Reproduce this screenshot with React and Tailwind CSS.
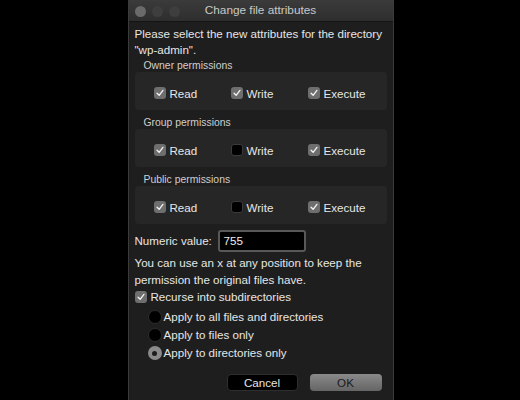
import React from "react";

function Check({ checked }) {
  return checked ? (
    <span className="flex h-[12px] w-[12px] shrink-0 items-center justify-center rounded-[3px] bg-[#6e6e6e]">
      <svg viewBox="0 0 12 12" className="h-[10px] w-[10px]">
        <path d="M2.5 6.3 L5 8.8 L9.5 2.8" fill="none" stroke="#f2f2f2" strokeWidth="1.6" strokeLinecap="round" strokeLinejoin="round" />
      </svg>
    </span>
  ) : (
    <span className="h-[12px] w-[12px] shrink-0 rounded-[3px] border border-[#3a3a3a] bg-black" />
  );
}

function Radio({ selected, label }) {
  return (
    <div className="flex h-[18px] items-center gap-[2px]">
      {selected ? (
        <span className="flex h-[14px] w-[14px] items-center justify-center rounded-full bg-[#8a8a8a]">
          <span className="h-[5px] w-[5px] rounded-full bg-[#1c1c1c]" />
        </span>
      ) : (
        <span className="h-[14px] w-[14px] rounded-full border border-[#2c2c2c] bg-black" />
      )}
      <span>{label}</span>
    </div>
  );
}

function PermGroup({ title, values, first }) {
  const names = ["Read", "Write", "Execute"];
  return (
    <div className={first ? "" : "mt-[5px]"}>
      <div className="h-[14px] pl-[9px] pt-[1px] text-[10.4px] leading-[14px] text-[#cfcfcf]">{title}</div>
      <div className="flex h-[38px] items-center rounded-[4px] bg-[#262626] pl-[19px] pt-[5px]">
        {names.map((n, i) => (
          <div key={n} className="flex w-[77px] items-center gap-[4px]">
            <Check checked={values[i]} />
            <span>{n}</span>
          </div>
        ))}
      </div>
    </div>
  );
}

export default function App() {
  return (
    <div
      className="flex h-[400px] w-[520px] justify-center overflow-hidden bg-black text-[11.6px] text-[#e6e6e6]"
      style={{ fontFamily: "'Liberation Sans', Arial, sans-serif" }}
    >
      <div className="ml-[1px] flex h-[410px] w-[266px] flex-col border-x border-t border-[#3b3b3b] bg-[#1e1e1e]">
        <div className="relative flex h-[21px] items-center justify-center border-b border-[#141414] bg-gradient-to-b from-[#3a3a3a] to-[#2e2e2e]">
          <div className="absolute left-[6px] top-[5px] flex gap-[6px]">
            <span className="h-[11px] w-[11px] rounded-full bg-[#6a6a6a]" />
            <span className="h-[11px] w-[11px] rounded-full bg-[#3e3e3e]" />
            <span className="h-[11px] w-[11px] rounded-full bg-[#3e3e3e]" />
          </div>
          <span className="text-[11.8px] text-[#c8c8c8]">Change file attributes</span>
        </div>
        <div className="flex flex-col px-[6px] pt-[4px]">
          <p className="leading-[16px]">
            Please select the new attributes for the directory "wp-admin".
          </p>
          <div className="flex flex-col">
            <PermGroup first title="Owner permissions" values={[true, true, true]} />
            <PermGroup title="Group permissions" values={[true, false, true]} />
            <PermGroup title="Public permissions" values={[true, false, true]} />
          </div>
          <div className="mt-[6px] flex items-center">
            <span className="w-[83px]">Numeric value:</span>
            <div className="flex h-[22px] w-[88px] items-center rounded-[3px] border-2 border-[#585858] bg-black pl-[4px] text-[#f0f0f0]">
              755
            </div>
          </div>
          <p className="mt-[2px] leading-[17px]">
            You can use an x at any position to keep the permission the original files have.
          </p>
          <div className="flex h-[18px] items-center gap-[4px]">
            <Check checked />
            <span>Recurse into subdirectories</span>
          </div>
          <div className="mt-[2px] flex flex-col pl-[13px]">
            <Radio label="Apply to all files and directories" />
            <Radio label="Apply to files only" />
            <Radio selected label="Apply to directories only" />
          </div>
          <div className="mt-[12px] flex justify-end gap-[12px] pr-[5px]">
            <div className="flex h-[17px] w-[71px] items-center justify-center rounded-[4px] border border-[#2e2e2e] bg-black text-[#e6e6e6]">
              Cancel
            </div>
            <div className="flex h-[17px] w-[72px] items-center justify-center rounded-[4px] bg-gradient-to-b from-[#8a8a8a] to-[#656565] text-[#1a1a1a]">
              OK
            </div>
          </div>
        </div>
      </div>
    </div>
  );
}
